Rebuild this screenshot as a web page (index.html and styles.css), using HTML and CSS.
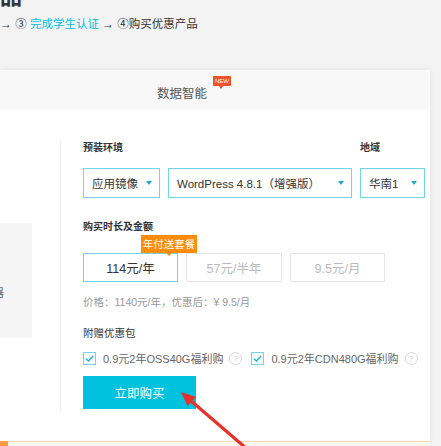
FILE: index.html
```html
<!DOCTYPE html>
<html lang="zh-CN">
<head>
<meta charset="utf-8">
<title>数据智能</title>
<link rel="stylesheet" href="styles.css">
</head>
<body>
<div class="page-title">品</div>
<div class="steps"><span class="arr">→</span> ③ <span class="hl">完成学生认证</span> <span class="arr">→</span> ④购买优惠产品</div>

<div class="card">
  <div class="card-head">
    <span class="title">数据智能<span class="badge">NEW</span></span>
  </div>
  <div class="card-body">
    <div class="side">
      <div class="side-panel"><span class="side-text">器</span></div>
    </div>
    <div class="form">
      <div class="env-grid">
        <div class="label span2">预装环境</div>
        <div class="label">地域</div>
        <div class="select"><span>应用镜像</span><i class="caret"></i></div>
        <div class="select"><span>WordPress 4.8.1（增强版）</span><i class="caret"></i></div>
        <div class="select"><span>华南1</span><i class="caret"></i></div>
      </div>

      <div class="label label-dur">购买时长及金额</div>
      <div class="options">
        <div class="opt active">114元/年<span class="tip">年付送套餐</span></div>
        <div class="opt">57元/半年</div>
        <div class="opt">9.5元/月</div>
      </div>
      <div class="price">价格：1140元/年，优惠后：¥ 9.5/月</div>

      <div class="label label-gift">附赠优惠包</div>
      <div class="gifts">
        <div class="gift"><span class="cb"><svg viewBox="0 0 13 13" width="13" height="13"><path d="M3 6.8 L5.4 9 L10 4" fill="none" stroke="#00b4d8" stroke-width="1.3"/></svg></span>0.9元2年OSS40G福利购<span class="q">?</span></div>
        <div class="gift"><span class="cb"><svg viewBox="0 0 13 13" width="13" height="13"><path d="M3 6.8 L5.4 9 L10 4" fill="none" stroke="#00b4d8" stroke-width="1.3"/></svg></span>0.9元2年CDN480G福利购<span class="q">?</span></div>
      </div>
      <button class="buy">立即购买</button>
    </div>
  </div>
</div>
<div class="notice"><span class="mark"></span></div>

<svg class="arrow" width="441" height="446" viewBox="0 0 441 446">
  <line x1="190" y1="400" x2="254" y2="455" stroke="#e8302a" stroke-width="3.2"/>
  <polygon points="181,392 187.5,406 196,397" fill="#e8302a"/>
</svg>
</body>
</html>
```

FILE: styles.css
```css
* { box-sizing: border-box; }
html, body { margin: 0; padding: 0; }
body {
  width: 441px;
  height: 446px;
  overflow: hidden;
  background: #f3f3f3;
  font-family: "Liberation Sans", "Noto Sans CJK SC", sans-serif;
  color: #333;
  position: relative;
}
.page-title {
  margin-top: -14px;
  font-size: 22px;
  line-height: 22px;
  font-weight: bold;
  color: #333;
}
.steps {
  margin-top: 8px;
  font-size: 11.5px;
  line-height: 16px;
  color: #333;
}
.steps .arr { font-size: 12px; }
.steps .hl { color: #00c1de; }

.card {
  margin-top: 38px;
  width: 430px;
  background: #fff;
  box-shadow: 0 0 6px rgba(0,0,0,0.08);
}
.card-head {
  height: 40px;
  background: #f8f8f8;
  display: flex;
  align-items: center;
  justify-content: center;
}
.title {
  position: relative;
  font-size: 12.5px;
  color: #555;
  margin-left: -66px;
  margin-top: 4px;
}
.badge {
  position: absolute;
  left: 56px;
  top: -7px;
  width: 18px;
  background: #f0502a;
  color: #fff;
  font-size: 6px;
  line-height: 10px;
  height: 10px;
  text-align: center;
  border-radius: 1px;
}
.badge::after {
  content: "";
  position: absolute;
  left: 6.5px;
  bottom: -3px;
  border-left: 2.5px solid transparent;
  border-right: 2.5px solid transparent;
  border-top: 3px solid #f0502a;
}

.card-body {
  display: flex;
  height: 331px;
}
.side {
  width: 61px;
  margin-top: 30px;
  height: 272px;
  border-right: 1px solid #f0f0f0;
}
.side-panel {
  margin-top: 83px;
  width: 32px;
  height: 115px;
  background: #f5f5f5;
  overflow: hidden;
}
.side-text {
  display: block;
  margin-top: 63px;
  margin-left: -7px;
  font-size: 11px;
  line-height: 14px;
  color: #666;
}
.form {
  padding-left: 22px;
  padding-top: 30px;
  width: 369px;
}
.label {
  font-size: 10px;
  line-height: 16px;
  color: #333;
  font-weight: bold;
}
.env-grid {
  display: grid;
  grid-template-columns: 77px 184px 65px;
  column-gap: 8px;
  row-gap: 12px;
}
.span2 { grid-column: span 2; }
.select {
  height: 30px;
  border: 1px solid #6fd6ea;
  display: flex;
  align-items: center;
  justify-content: space-between;
  padding: 0 7px 0 8px;
  font-size: 11.5px;
  color: #333;
}
.caret {
  width: 0;
  height: 0;
  border-left: 3.5px solid transparent;
  border-right: 3.5px solid transparent;
  border-top: 4px solid #1fa9d0;
}
.label-dur { margin-top: 21px; }
.options {
  margin-top: 18px;
  display: flex;
  gap: 8px;
}
.opt {
  position: relative;
  width: 95px;
  height: 29px;
  border: 1px solid #e6e6e6;
  display: flex;
  align-items: center;
  justify-content: center;
  font-size: 12.5px;
  color: #bbb;
}
.opt:nth-child(2) { width: 96px; }
.opt.active {
  border-color: #6fd6ea;
  color: #333;
}
.tip {
  position: absolute;
  left: 57px;
  top: -19px;
  width: 56px;
  height: 18px;
  background: #ff8c0a;
  color: #fff;
  font-size: 10.5px;
  line-height: 18px;
  text-align: center;
}
.tip::after {
  content: "";
  position: absolute;
  left: 25px;
  bottom: -3px;
  border-left: 3px solid transparent;
  border-right: 3px solid transparent;
  border-top: 3px solid #ff8c0a;
}
.price {
  margin-top: 12px;
  font-size: 10.5px;
  line-height: 16px;
  color: #999;
}
.label-gift { margin-top: 15px; font-weight: normal; font-size: 10.5px; }
.gifts {
  margin-top: 9px;
  display: flex;
  gap: 9px;
  height: 16px;
}
.gift {
  display: flex;
  align-items: center;
  font-size: 11px;
  color: #666;
}
.cb {
  width: 13px;
  height: 13px;
  border: 1px solid #6fd6ea;
  margin-right: 7px;
  display: flex;
}
.cb svg { margin: -1px; }
.q {
  width: 13px;
  height: 13px;
  border: 1px solid #d8d8d8;
  border-radius: 50%;
  color: #c8c8c8;
  font-size: 8px;
  line-height: 11px;
  text-align: center;
  margin-left: 6px;
}
.buy {
  display: block;
  margin-top: 10px;
  width: 113px;
  height: 33px;
  border: none;
  background: #00c1de;
  color: #fff;
  font-family: "Liberation Sans", "Noto Sans CJK SC", sans-serif;
  font-size: 12.5px;
  padding: 0;
}
.notice {
  width: 430px;
  height: 20px;
  border-top: 1px solid #fcd8b5;
  background: #fff8f1;
  position: relative;
}
.mark {
  position: absolute;
  left: 0;
  top: -1px;
  width: 8px;
  height: 6px;
  background: #ff9a3c;
}
.arrow {
  position: absolute;
  left: 0;
  top: 0;
  pointer-events: none;
}
```
